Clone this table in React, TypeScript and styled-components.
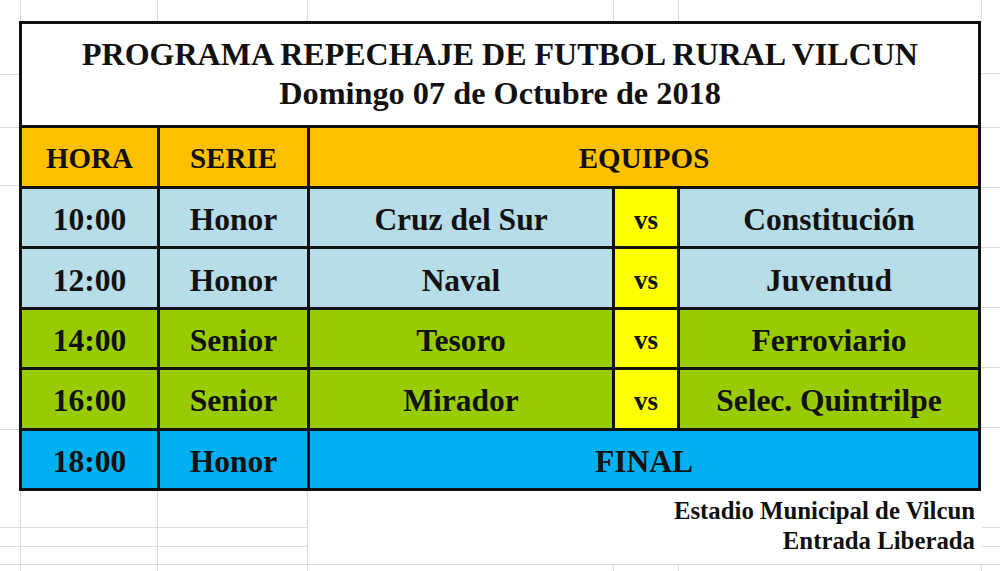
import React from 'react'
import styled, { createGlobalStyle } from 'styled-components'

const GlobalStyle = createGlobalStyle`
    html, body {
        margin: 0;
        padding: 0;
        background: #ffffff;
    }
    body {
        font-family: 'Liberation Serif', 'Times New Roman', serif;
        color: #111;
    }
`

const gridLine = '#dcdcdc'
// spreadsheet column widths (x edges 0, 21, 158, 308, 614, 679, 982, 1000)
const sheetCols = [21, 137, 150, 306, 65, 303, 18]

const Sheet = styled.div`
    width: 1000px;
    height: 571px;
    overflow: hidden;
    display: flex;
    flex-direction: column;
`

const EdgeRow = styled.div<{ $height: number }>`
    display: flex;
    height: ${(p) => p.$height}px;
    flex-shrink: 0;
`

const GridCell = styled.div<{ $width: number; $right?: boolean; $bottom?: boolean }>`
    width: ${(p) => p.$width}px;
    box-sizing: border-box;
    flex-shrink: 0;
    border-right: ${(p) => (p.$right ? `1px solid ${gridLine}` : 'none')};
    border-bottom: ${(p) => (p.$bottom ? `1px solid ${gridLine}` : 'none')};
`

const Middle = styled.div`
    display: flex;
    height: 470px;
    flex-shrink: 0;
`

const Gutter = styled.div<{ $width: number }>`
    width: ${(p) => p.$width}px;
    display: flex;
    flex-direction: column;
`

const GutterCell = styled.div<{ $h: number; $line?: boolean }>`
    height: ${(p) => p.$h}px;
    box-sizing: border-box;
    border-bottom: ${(p) => (p.$line ? `1px solid ${gridLine}` : 'none')};
`

const Table = styled.div`
    width: 962px;
    box-sizing: border-box;
    background: #111;
    padding: 3px;
    display: grid;
    grid-template-columns: 135px 147px 302px 62px 298px;
    grid-template-rows: 101px 58px repeat(5, 57.4px);
    gap: 3px;
`

const TitleCell = styled.div`
    grid-column: 1 / span 5;
    background: #fff;
    display: flex;
    flex-direction: column;
    align-items: center;
    justify-content: center;
    font-weight: bold;
    padding-bottom: 2px;
`

const TitleLine = styled.div<{ $size: number }>`
    font-size: ${(p) => p.$size}px;
    line-height: 39px;
    white-space: nowrap;
`

const Cell = styled.div<{ $bg: string; $span?: number; $size?: number; $shift?: number }>`
    grid-column: span ${(p) => p.$span || 1};
    background: ${(p) => p.$bg};
    display: flex;
    align-items: center;
    justify-content: center;
    font-weight: bold;
    font-size: ${(p) => p.$size || 31.5}px;
    white-space: nowrap;
    padding-top: ${(p) => p.$shift ?? 5}px;
    box-sizing: border-box;
`

const Bottom = styled.div`
    display: grid;
    grid-template-columns: ${sheetCols.map((w) => w + 'px').join(' ')};
    grid-template-rows: 18px 19px 19px 18px 1fr;
    flex: 1;
`

const BCell = styled.div<{ $right?: boolean; $bottom?: boolean }>`
    box-sizing: border-box;
    border-right: ${(p) => (p.$right ? `1px solid ${gridLine}` : 'none')};
    border-bottom: ${(p) => (p.$bottom ? `1px solid ${gridLine}` : 'none')};
`

const Footer = styled.div`
    grid-column: 4 / span 3;
    grid-row: 1 / span 4;
    box-sizing: border-box;
    border-bottom: 1px solid ${gridLine};
    display: flex;
    flex-direction: column;
    align-items: flex-end;
    padding-right: 7px;
    padding-top: 5px;
    font-weight: bold;
    font-size: 24.8px;
    line-height: 30px;
`

const colors = {
    orange: '#ffc000',
    sky: '#b7dde8',
    green: '#99cc00',
    blue: '#00b0f0',
    yellow: '#ffff00',
}

type Match = { hora: string; serie: string; local: string; visita: string; bg: string }

const matches: Match[] = [
    { hora: '10:00', serie: 'Honor', local: 'Cruz del Sur', visita: 'Constitución', bg: colors.sky },
    { hora: '12:00', serie: 'Honor', local: 'Naval', visita: 'Juventud', bg: colors.sky },
    { hora: '14:00', serie: 'Senior', local: 'Tesoro', visita: 'Ferroviario', bg: colors.green },
    { hora: '16:00', serie: 'Senior', local: 'Mirador', visita: 'Selec. Quintrilpe', bg: colors.green },
]

const leftGutter = [
    { h: 54, line: true },
    { h: 53, line: true },
    { h: 58, line: true },
    { h: 244, line: true },
    { h: 61, line: false },
]

const rightGutter = [
    { h: 53, line: true },
    { h: 54, line: true },
    { h: 60, line: true },
    { h: 60, line: true },
    { h: 60, line: true },
    { h: 60, line: true },
    { h: 60, line: true },
    { h: 63, line: false },
]

const App: React.FC = () => {
    return (
        <>
            <GlobalStyle />
            <Sheet>
                <EdgeRow $height={21}>
                    {sheetCols.map((w, i) => (
                        <GridCell key={i} $width={w} $right={i < sheetCols.length - 1} />
                    ))}
                </EdgeRow>
                <Middle>
                    <Gutter $width={19}>
                        {leftGutter.map((c, i) => (
                            <GutterCell key={i} $h={c.h} $line={c.line} />
                        ))}
                    </Gutter>
                    <Table>
                        <TitleCell>
                            <TitleLine $size={32}>
                                PROGRAMA REPECHAJE DE FUTBOL RURAL VILCUN
                            </TitleLine>
                            <TitleLine $size={32.3}>Domingo 07 de Octubre de 2018</TitleLine>
                        </TitleCell>

                        <Cell $bg={colors.orange} $size={29} $shift={2}>HORA</Cell>
                        <Cell $bg={colors.orange} $size={29} $shift={2}>SERIE</Cell>
                        <Cell $bg={colors.orange} $size={29} $shift={2} $span={3}>
                            EQUIPOS
                        </Cell>

                        {matches.map((m) => (
                            <React.Fragment key={m.hora}>
                                <Cell $bg={m.bg}>{m.hora}</Cell>
                                <Cell $bg={m.bg}>{m.serie}</Cell>
                                <Cell $bg={m.bg}>{m.local}</Cell>
                                <Cell $bg={colors.yellow} $size={27}>vs</Cell>
                                <Cell $bg={m.bg}>{m.visita}</Cell>
                            </React.Fragment>
                        ))}

                        <Cell $bg={colors.blue}>18:00</Cell>
                        <Cell $bg={colors.blue}>Honor</Cell>
                        <Cell $bg={colors.blue} $span={3}>FINAL</Cell>
                    </Table>
                    <Gutter $width={19}>
                        {rightGutter.map((c, i) => (
                            <GutterCell key={i} $h={c.h} $line={c.line} />
                        ))}
                    </Gutter>
                </Middle>
                <Bottom>
                    {[0, 1, 2, 3].map((r) => (
                        <React.Fragment key={r}>
                            <BCell style={{ gridRow: r + 1, gridColumn: 1 }} $right $bottom={r > 0} />
                            <BCell style={{ gridRow: r + 1, gridColumn: 2 }} $right $bottom={r > 0} />
                            <BCell style={{ gridRow: r + 1, gridColumn: 3 }} $right $bottom={r > 0} />
                            <BCell style={{ gridRow: r + 1, gridColumn: 7 }} $bottom={r > 0} />
                        </React.Fragment>
                    ))}
                    <Footer>
                        <div>Estadio Municipal de Vilcun</div>
                        <div>Entrada Liberada</div>
                    </Footer>
                    {sheetCols.map((_, i) => (
                        <BCell key={i} style={{ gridRow: 5, gridColumn: i + 1 }} $right={i < 6} />
                    ))}
                </Bottom>
            </Sheet>
        </>
    )
}

export default App
